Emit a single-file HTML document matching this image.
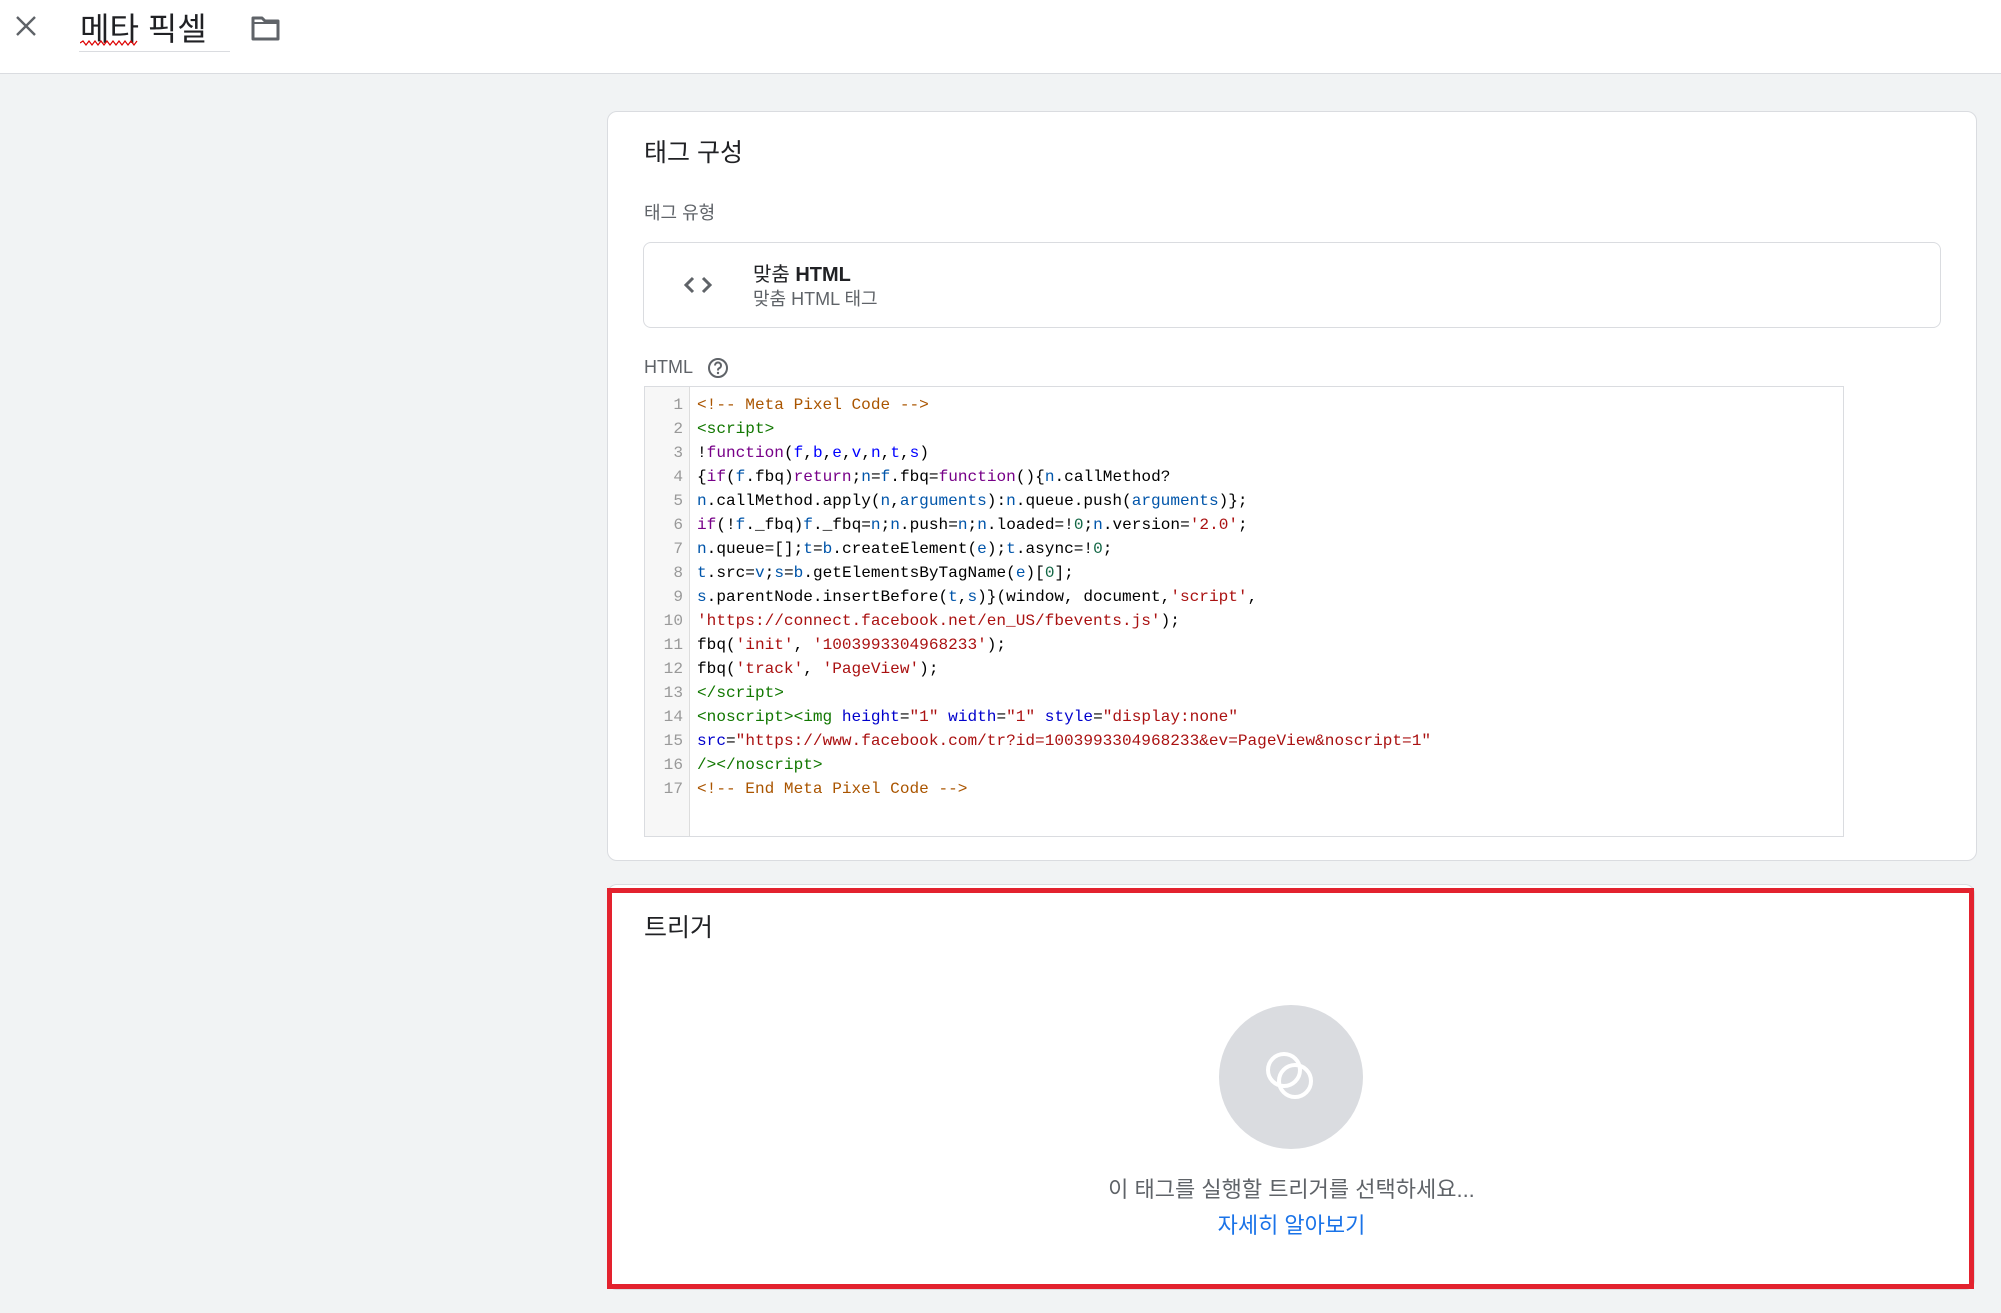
<!DOCTYPE html>
<html><head><meta charset="utf-8"><style>
*{box-sizing:border-box;margin:0;padding:0}
body{width:2001px;height:1313px;background:#f1f3f4;font-family:"Liberation Sans","Noto Sans CJK KR",sans-serif;position:relative;overflow:hidden;color:#202124}
.hdr{position:absolute;left:0;top:0;width:2001px;height:74px;background:#fff;border-bottom:1px solid #dadce0}
.abs{position:absolute}
.card{position:absolute;background:#fff;border:1px solid #dadce0;border-radius:10px}
.code{position:absolute;left:644px;top:386px;width:1200px;height:451px;border:1px solid #dadce0;background:#fff;font-family:"Liberation Mono",monospace;font-size:16.1px;line-height:24px}
.gut{position:absolute;left:0;top:0;width:45px;height:100%;background:#f7f7f7;border-right:1px solid #ddd;color:#999;text-align:right;padding-right:6px;padding-top:6px}
.lines{position:absolute;left:52px;top:6px;white-space:pre;color:#000}
.c{color:#a50}.t{color:#170}.k{color:#708}.d{color:#00f}.v{color:#05a}.s{color:#a11}.n{color:#164}.a{color:#00c}
</style></head><body>
<div class="hdr">
<svg class="abs" style="left:14px;top:14px" width="24" height="24" viewBox="0 0 24 24"><path d="M3 3L21 21M21 3L3 21" stroke="#5f6368" stroke-width="2.4"/></svg>
<div class="abs" style="left:80px;top:4px;font-size:32px;color:#202124">메타 픽셀</div>
<svg class="abs" style="left:80px;top:40px" width="60" height="6"><path d="M0 3 l3 -2 l3 4 l3 -4 l3 4 l3 -4 l3 4 l3 -4 l3 4 l3 -4 l3 4 l3 -4 l3 4 l3 -4 l3 4 l3 -4 l3 4 l3 -4 l3 4 l3 -4" stroke="#d00" fill="none" stroke-width="1.2"/></svg>
<div class="abs" style="left:79px;top:51px;width:151px;height:1px;background:#dadce0"></div>
<svg class="abs" style="left:251px;top:15px" width="30" height="28" viewBox="0 0 30 28"><path d="M2 3h9l3 3h13v18H2z" fill="none" stroke="#5f6368" stroke-width="3" stroke-linejoin="round"/><path d="M2 8h25" stroke="#5f6368" stroke-width="2"/></svg>
</div>

<div class="card" style="left:607px;top:111px;width:1370px;height:750px"></div>
<div class="abs" style="left:644px;top:133px;font-size:25px">태그 구성</div>
<div class="abs" style="left:644px;top:199px;font-size:18px;color:#5f6368">태그 유형</div>
<div class="abs" style="left:643px;top:242px;width:1298px;height:86px;border:1px solid #dadce0;border-radius:8px;background:#fff"></div>
<svg class="abs" style="left:682px;top:274px" width="32" height="22" viewBox="0 0 32 22"><path d="M11 4L4 11L11 18M21 4L28 11L21 18" stroke="#5f6368" stroke-width="3" fill="none"/></svg>
<div class="abs" style="left:753px;top:258px;font-size:20px;color:#202124"><span>맞춤 </span><b>HTML</b></div>
<div class="abs" style="left:753px;top:285px;font-size:18px;color:#5f6368">맞춤 HTML 태그</div>
<div class="abs" style="left:644px;top:357px;font-size:18px;color:#5f6368">HTML</div>
<svg class="abs" style="left:707px;top:357px" width="22" height="22" viewBox="0 0 22 22"><circle cx="11" cy="11" r="9" stroke="#5f6368" stroke-width="2" fill="none"/><path d="M8 8.5a3 3 0 1 1 4 2.8c-1 .4-1 1-1 2.2" stroke="#5f6368" stroke-width="2" fill="none"/><circle cx="11" cy="16" r="1.2" fill="#5f6368"/></svg>

<div class="code">
<div class="gut">1<br>2<br>3<br>4<br>5<br>6<br>7<br>8<br>9<br>10<br>11<br>12<br>13<br>14<br>15<br>16<br>17</div>
<div class="lines"><span class="c">&lt;!-- Meta Pixel Code --&gt;</span>
<span class="t">&lt;script&gt;</span>
!<span class="k">function</span>(<span class="d">f</span>,<span class="d">b</span>,<span class="d">e</span>,<span class="d">v</span>,<span class="d">n</span>,<span class="d">t</span>,<span class="d">s</span>)
{<span class="k">if</span>(<span class="v">f</span>.fbq)<span class="k">return</span>;<span class="v">n</span>=<span class="v">f</span>.fbq=<span class="k">function</span>(){<span class="v">n</span>.callMethod?
<span class="v">n</span>.callMethod.apply(<span class="v">n</span>,<span class="v">arguments</span>):<span class="v">n</span>.queue.push(<span class="v">arguments</span>)};
<span class="k">if</span>(!<span class="v">f</span>._fbq)<span class="v">f</span>._fbq=<span class="v">n</span>;<span class="v">n</span>.push=<span class="v">n</span>;<span class="v">n</span>.loaded=!<span class="n">0</span>;<span class="v">n</span>.version=<span class="s">'2.0'</span>;
<span class="v">n</span>.queue=[];<span class="v">t</span>=<span class="v">b</span>.createElement(<span class="v">e</span>);<span class="v">t</span>.async=!<span class="n">0</span>;
<span class="v">t</span>.src=<span class="v">v</span>;<span class="v">s</span>=<span class="v">b</span>.getElementsByTagName(<span class="v">e</span>)[<span class="n">0</span>];
<span class="v">s</span>.parentNode.insertBefore(<span class="v">t</span>,<span class="v">s</span>)}(window, document,<span class="s">'script'</span>,
<span class="s">'https://connect.facebook.net/en_US/fbevents.js'</span>);
fbq(<span class="s">'init'</span>, <span class="s">'1003993304968233'</span>);
fbq(<span class="s">'track'</span>, <span class="s">'PageView'</span>);
<span class="t">&lt;/script&gt;</span>
<span class="t">&lt;noscript&gt;&lt;img</span> <span class="a">height</span>=<span class="s">"1"</span> <span class="a">width</span>=<span class="s">"1"</span> <span class="a">style</span>=<span class="s">"display:none"</span>
<span class="a">src</span>=<span class="s">"https://www.facebook.com/tr?id=1003993304968233&amp;ev=PageView&amp;noscript=1"</span>
<span class="t">/&gt;&lt;/noscript&gt;</span>
<span class="c">&lt;!-- End Meta Pixel Code --&gt;</span></div>
</div>

<div class="card" style="left:607px;top:884px;width:1368px;height:406px"></div>
<div class="abs" style="left:607px;top:888px;width:1367px;height:401px;border:5px solid #e3222e"></div>
<div class="abs" style="left:644px;top:908px;font-size:25px">트리거</div>
<div class="abs" style="left:1219px;top:1005px;width:144px;height:144px;border-radius:50%;background:#dadce0"></div>
<svg class="abs" style="left:1259px;top:1045px" width="64" height="64" viewBox="0 0 64 64"><circle cx="25" cy="25" r="16" stroke="#fff" stroke-width="4" fill="none"/><circle cx="36" cy="36" r="16" stroke="#fff" stroke-width="4" fill="none"/></svg>
<div class="abs" style="left:950px;top:1172px;width:683px;text-align:center;font-size:22px;color:#5f6368">이 태그를 실행할 트리거를 선택하세요...</div>
<div class="abs" style="left:950px;top:1208px;width:683px;text-align:center;font-size:22px;color:#1a73e8">자세히 알아보기</div>
</body></html>
